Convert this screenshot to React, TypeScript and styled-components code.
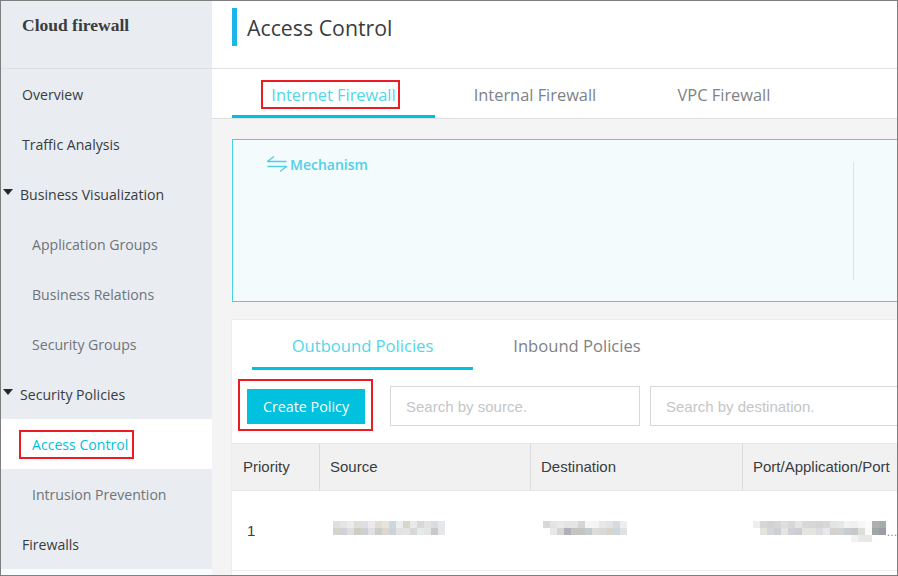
import React from 'react';
import styled, {createGlobalStyle} from 'styled-components';

const GlobalStyle = createGlobalStyle`
  html, body {
    margin: 0;
    padding: 0;
    background: #fff;
  }
  * {
    box-sizing: border-box;
  }
`;

const Frame = styled.div`
  width: 898px;
  height: 576px;
  display: flex;
  overflow: hidden;
  background: #f4f4f4;
  border: 1px solid #7f7f7f;
  font-family: 'Open Sans', 'Noto Sans', sans-serif;
  color: #373d41;
`;

const Sidebar = styled.aside`
  width: 211px;
  flex-shrink: 0;
  display: flex;
  flex-direction: column;
  background: #fafbfd;
`;

const Brand = styled.div`
  height: 68px;
  padding: 14px 0 0 21px;
  background: #e9ecf1;
  border-bottom: 1px solid #dfe0e2;
  font-family: 'Liberation Serif', serif;
  font-size: 17.5px;
  font-weight: 700;
  line-height: 20px;
`;

const NavItem = styled.div<{$level: number; $active?: boolean}>`
  height: 50px;
  display: flex;
  align-items: center;
  flex-shrink: 0;
  padding-left: ${({$level}) => ($level === 2 ? 31 : $level === 1 ? 1 : 21)}px;
  background: ${({$active}) => ($active ? '#fff' : '#e9ecf1')};
  color: ${({$level, $active}) => ($active ? '#00c1de' : $level === 2 ? '#6f7479' : '#373d41')};
  font-size: 14.1px;
`;

const Caret = styled.span`
  width: 0;
  height: 0;
  margin: -5px 7px 0 1px;
  border-left: 5px solid transparent;
  border-right: 5px solid transparent;
  border-top: 6px solid #26292c;
`;

const Main = styled.main`
  flex: 1;
  min-width: 0;
  display: flex;
  flex-direction: column;
`;

const Header = styled.header`
  height: 68px;
  flex-shrink: 0;
  display: flex;
  align-items: center;
  padding: 0 0 15px 20px;
  background: #fff;
  border-bottom: 1px solid #dfe0e2;
`;

const TitleMark = styled.span`
  width: 5px;
  height: 38px;
  margin: 0 10px 0 0;
  background: #1cb5ec;
`;

const Title = styled.h1`
  margin: 1px 0 0;
  font-size: 21.3px;
  font-weight: 400;
`;

const TabBar = styled.nav`
  height: 50px;
  flex-shrink: 0;
  display: flex;
  padding-left: 20px;
  background: #fff;
  border-bottom: 1px solid #dfe0e2;
`;

const Tab = styled.div<{$active?: boolean; $width: number}>`
  width: ${({$width}) => $width}px;
  height: 49px;
  display: flex;
  align-items: center;
  justify-content: center;
  padding-top: 5px;
  border-bottom: 3px solid ${({$active}) => ($active ? '#00c1de' : 'transparent')};
  color: ${({$active}) => ($active ? '#4fd8ea' : '#7d8287')};
  font-size: 16.4px;
`;

const Marked = styled.span`
  outline: 2px solid #ed1c24;
`;

const TabMark = styled(Marked)`
  padding: 0 2px 0 8px;
  margin-right: 6px;
  line-height: 25px;
`;

const Content = styled.div`
  flex: 1;
  min-height: 0;
  display: flex;
  flex-direction: column;
  padding: 20px 0 0 20px;
`;

const Mechanism = styled.section`
  height: 163px;
  flex-shrink: 0;
  display: flex;
  justify-content: space-between;
  margin-bottom: 18px;
  background: #f3fbfd;
  border: 1px solid #45d0e3;
  border-right: none;
`;

const MechanismTitle = styled.div`
  height: 22px;
  display: flex;
  align-items: center;
  gap: 3px;
  margin: 13px 0 0 34px;
  color: #4fd0e8;
  font-size: 14px;
  font-weight: 600;
`;

const MechanismDivider = styled.div`
  width: 1px;
  height: 118px;
  margin: 22px 43px 0 0;
  background: #dfe3e5;
`;

const Card = styled.section`
  flex: 1;
  background: #fff;
  box-shadow: 0 0 2px rgba(0, 0, 0, 0.1);
`;

const SubTabs = styled.nav`
  height: 50px;
  display: flex;
  padding-left: 20px;
`;

const SubTab = styled.div<{$active?: boolean; $width: number}>`
  width: ${({$width}) => $width}px;
  display: flex;
  align-items: center;
  justify-content: center;
  padding-top: 3px;
  border-bottom: 3px solid ${({$active}) => ($active ? '#00c1de' : 'transparent')};
  color: ${({$active}) => ($active ? '#4fd8ea' : '#7d8287')};
  font-size: 16.6px;
`;

const Toolbar = styled.div`
  height: 73px;
  display: flex;
  align-items: center;
  padding: 0 0 1px 8px;
  gap: 10px;
`;

const ButtonMark = styled(Marked)`
  display: flex;
  padding: 8px 6px 5px 7px;
  margin: -2px 9px 0 0;
`;

const PrimaryButton = styled.button`
  width: 118px;
  height: 35px;
  padding: 0;
  border: none;
  background: #00c1de;
  color: #fff;
  font-family: inherit;
  font-size: 14.3px;
`;

const SearchInput = styled.input`
  width: 250px;
  height: 40px;
  flex-shrink: 0;
  padding: 0 15px;
  background: #fff;
  border: 1px solid #d7d8d9;
  font-family: 'Liberation Sans', sans-serif;
  font-size: 15px;
  &::placeholder {
    color: #c4c6c7;
    opacity: 1;
  }
`;

const Table = styled.div`
  display: grid;
  grid-template-columns: 88px 211px 212px 1fr;
  font-family: 'Liberation Sans', sans-serif;
  font-size: 15px;
`;

const HeadCell = styled.div<{$last?: boolean; $inset?: number}>`
  height: 48px;
  display: flex;
  align-items: center;
  padding: 0 0 2px ${({$inset}) => $inset ?? 10}px;
  white-space: nowrap;
  background: #f1f1f1;
  border-top: 1px solid #e8e8e8;
  border-bottom: 1px solid #e8e8e8;
  border-right: ${({$last}) => ($last ? 'none' : '1px solid #dcdcdc')};
`;

const BodyCell = styled.div<{$inset: number}>`
  height: 80px;
  display: flex;
  align-items: center;
  padding-left: ${({$inset}) => $inset}px;
  white-space: nowrap;
  border-bottom: 1px solid #ececec;
`;

const MosaicSvg = styled.svg<{$rows: number}>`
  display: block;
  flex-shrink: 0;
  margin-top: -5px;
  margin-bottom: ${({$rows}) => -($rows - 2) * 7}px;
`;

const Ellipsis = styled.span`
  margin: 2px 0 0 1px;
  color: #8a8f92;
  font-size: 12px;
`;

// Pixelated redaction, each cell is one 7px mosaic block.
const Mosaic = ({rows}: {rows: string[][]}) => (
  <MosaicSvg $rows={rows.length} width={rows[0].length * 7} height={rows.length * 7}>
    {rows.map((row, y) =>
      row.map((fill, x) => (fill ? <rect key={`${x}-${y}`} x={x * 7} y={y * 7} width={7} height={7} fill={fill} /> : null)),
    )}
  </MosaicSvg>
);

const SOURCE_BLUR = [
  ['#e2dfda', '#e4e4e4', '#eaecec', '#e0dcd6', '#dce0e4', '#eaeaec', '#e2dcd6', '#e6e4de', '#ccd6dc', '#eaeeee', '#d6d6ce', '#eaeaea', '#d8d8d8', '#e2e4e0', '#d8dcdc', '#e4e8ea'],
  ['#d4d4cc', '#d0d2d6', '#dcdee0', '#d0ccc6', '#ccd0d2', '#e0e0e2', '#ccccca', '#dcd8d0', '#ccd4d8', '#e2e2e4', '#e4e4e4', '#d8d8d6', '#e4ecea', '#e4e4e2', '#c8c8c8', '#e4e6ea'],
];

const DEST_BLUR = [
  ['#d8d8d8', '#e4e4e4', '#e8eaea', '#e4e6e6', '#e4e6e4', '#d4d6d4', '#f4f6f8', '#f4f4f4', '#e8e8e8', '#e4e4e4', '#d4dce0', '#eceef0'],
  ['', '#e8e8e8', '#d4d6d0', '#b0b0bc', '#c4c4c4', '#c4c4c0', '#c4ccd2', '#dcdcd8', '#d8dad8', '#d8d4c8', '#c8d8e0', '#e0e2e2'],
];

const PORT_BLUR = [
  ['#eeeeee', '#d4d6d8', '#d0d2d4', '#d4d6d8', '#dcdee0', '#d6d8da', '#e4e6e0', '#d6d8da', '#d8d6d8', '#d4d4d6', '#d6d8da', '#e0e6e8', '#e4e8e8', '#f2f2f0', '#eef0f4', '#f6f6f6', '#fcfcfa', '#acb0b0', '#a4acac'],
  ['', '#e4e4dc', '#d4d6da', '#ccd0d6', '#e4e4e0', '#d0d0d8', '#ccccd4', '#e4e4e0', '#e4e4e0', '#dcdce0', '#e6e8ec', '#d4d2ce', '#d0d4d6', '#c8ccd0', '#c4cac8', '#dcdedc', '#fcfaf6', '#a0a6a6', '#a09aa8'],
  ['', '', '', '', '', '', '', '', '', '', '', '', '', '', '#f2f2f2', '#e8e8e8', '#e8e8e8', '', ''],
];

const Arrows = () => (
  <svg width="20" height="16" viewBox="0 0 20 16" fill="none" stroke="#4fd0e8" strokeWidth="1.3">
    <path d="M7 0.5L0.5 5.5H19.5" />
    <path d="M0.5 10.5H19.5L13 15.5" />
  </svg>
);

const NavLink = ({label, level}: {label: string; level: number}) => <NavItem $level={level}>{label}</NavItem>;

const NavGroup = ({label}: {label: string}) => (
  <NavItem $level={1}>
    <Caret />
    {label}
  </NavItem>
);

const AccessMark = styled(Marked)`
  margin: 1px 0 0 -11px;
  padding: 0 4px 0 11px;
  line-height: 25px;
`;

export default function App() {
  return (
    <>
      <GlobalStyle />
      <Frame>
        <Sidebar>
          <Brand>Cloud firewall</Brand>
          <NavLink label="Overview" level={0} />
          <NavLink label="Traffic Analysis" level={0} />
          <NavGroup label="Business Visualization" />
          <NavLink label="Application Groups" level={2} />
          <NavLink label="Business Relations" level={2} />
          <NavLink label="Security Groups" level={2} />
          <NavGroup label="Security Policies" />
          <NavItem $level={2} $active>
            <AccessMark>Access Control</AccessMark>
          </NavItem>
          <NavLink label="Intrusion Prevention" level={2} />
          <NavLink label="Firewalls" level={0} />
        </Sidebar>
        <Main>
          <Header>
            <TitleMark />
            <Title>Access Control</Title>
          </Header>
          <TabBar>
            <Tab $active $width={203}>
              <TabMark>Internet Firewall</TabMark>
            </Tab>
            <Tab $width={200}>Internal Firewall</Tab>
            <Tab $width={178}>VPC Firewall</Tab>
          </TabBar>
          <Content>
            <Mechanism>
              <MechanismTitle>
                <Arrows />
                Mechanism
              </MechanismTitle>
              <MechanismDivider />
            </Mechanism>
            <Card>
              <SubTabs>
                <SubTab $active $width={221}>Outbound Policies</SubTab>
                <SubTab $width={208}>Inbound Policies</SubTab>
              </SubTabs>
              <Toolbar>
                <ButtonMark>
                  <PrimaryButton>Create Policy</PrimaryButton>
                </ButtonMark>
                <SearchInput placeholder="Search by source." />
                <SearchInput placeholder="Search by destination." />
              </Toolbar>
              <Table>
                <HeadCell $inset={11}>Priority</HeadCell>
                <HeadCell>Source</HeadCell>
                <HeadCell>Destination</HeadCell>
                <HeadCell $last>Port/Application/Port</HeadCell>
                <BodyCell $inset={15}>1</BodyCell>
                <BodyCell $inset={13}>
                  <Mosaic rows={SOURCE_BLUR} />
                </BodyCell>
                <BodyCell $inset={12}>
                  <Mosaic rows={DEST_BLUR} />
                </BodyCell>
                <BodyCell $inset={10}>
                  <Mosaic rows={PORT_BLUR} />
                  <Ellipsis>...</Ellipsis>
                </BodyCell>
              </Table>
            </Card>
          </Content>
        </Main>
      </Frame>
    </>
  );
}
